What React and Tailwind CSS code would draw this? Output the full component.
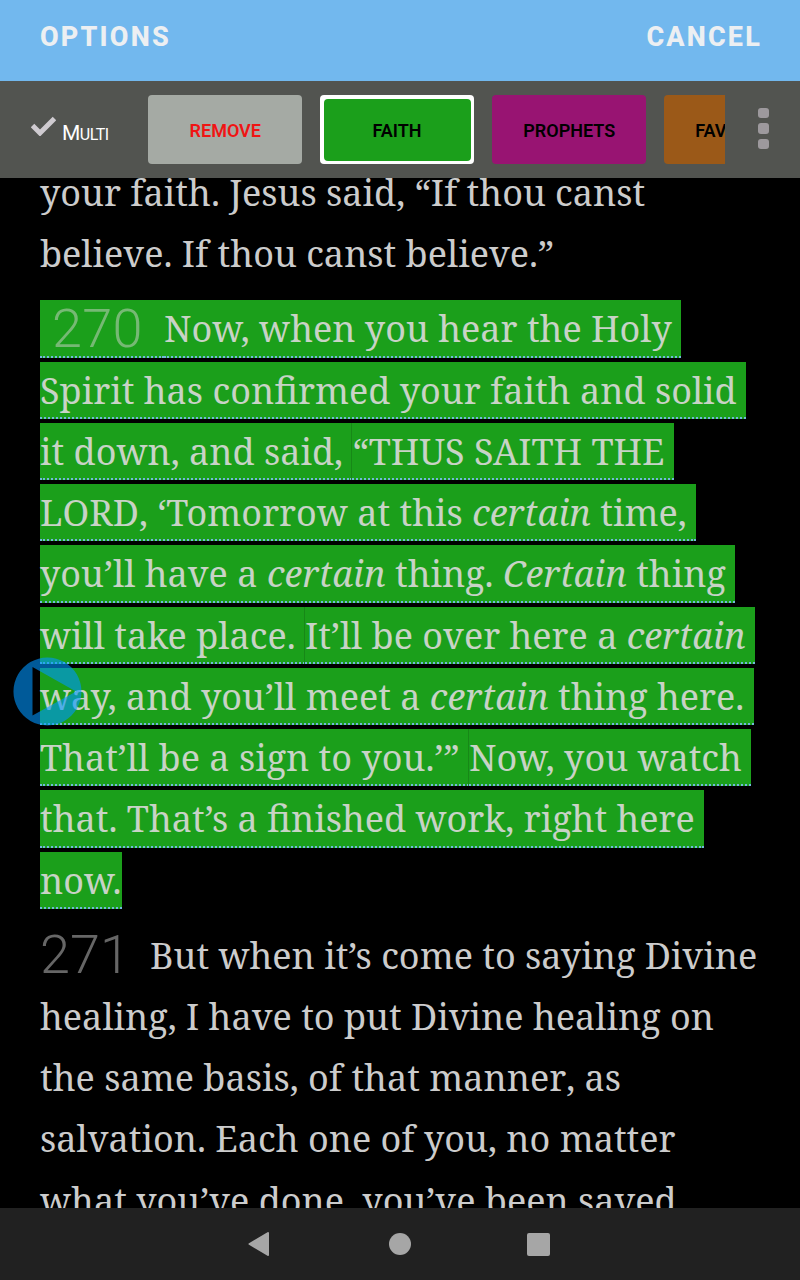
import React from 'react';
import clsx from 'clsx';

const categories = [
    { name: 'REMOVE', style: 'bg-[#a5aaa4] text-[#f01414]' },
    { name: 'FAITH', style: 'bg-white text-black', selected: true },
    { name: 'PROPHETS', style: 'bg-[#981472] text-black' },
    { name: 'FAVORITES', style: 'bg-[#9b5918] text-black' },
];

// Each line is a list of runs, a run holds plain or italic pieces
const highlighted = [
    { runs: [['Now, when you hear the Holy ']], number: '270' },
    { runs: [['Spirit has confirmed your faith and solid ']] },
    { runs: [['it down, and said, '], ['“THUS SAITH THE ']] },
    { runs: [['LORD', ', ‘', 'Tomorrow at this ', { i: 'certain' }, ' time, ']] },
    { runs: [['you’ll have a ', { i: 'certain' }, ' thing. ', { i: 'Certain' }, ' thing ']] },
    { runs: [['will take place. '], ['It’ll be over here a ', { i: 'certain' }, ' ']] },
    { runs: [['way, and you’ll meet a ', { i: 'certain' }, ' thing here. ']] },
    { runs: [['That’ll be a sign to you.’” '], ['Now, you watch ']] },
    { runs: [['that. That’s a finished work, right here ']] },
    { runs: [['now.']] },
];

const following = [
    { pieces: ['But when it’s come to saying Divine'], number: '271' },
    { pieces: ['healing, I have to put Divine healing on'] },
    { pieces: ['the same basis, of that manner', ', as'] },
    { pieces: ['salvation. Each one of you, no matter'] },
    { pieces: ['what you’ve done, you’ve been saved'] },
];

// inline-block keeps the pieces from kerning into each other
const Pieces = ({ pieces }) =>
    pieces.map((piece, i) =>
        typeof piece === 'string' ? <span key={i} className="inline-block">{piece}</span> : <i key={i}>{piece.i}</i>
    );

const VerseNumber = ({ children, className }) => (
    <span className={clsx("inline-block font-['Roboto'] text-[54px] font-light leading-[50px]", className)}>
        {children}
    </span>
);

const App = () => {
    return (
        <div className="flex h-[1280px] w-[800px] flex-col overflow-hidden bg-black font-['Roboto',sans-serif]">
            <header className="flex h-[81px] shrink-0 items-start justify-between bg-[#72b8ee] px-10 pt-[21px] text-[27px] font-extrabold leading-8 tracking-[2.2px] text-[#eceff2]">
                <button>OPTIONS</button>
                <button className="-mr-[2px]">CANCEL</button>
            </header>

            <div className="flex h-[97px] shrink-0 items-center bg-[#525450]">
                <button className="flex w-[148px] shrink-0 items-center pl-[31px] text-white">
                    <svg width="25" height="20" viewBox="0 0 25 20" className="-mt-[7px]">
                        <path d="M1.5 9.5 L9 17 L23.5 2.5" fill="none" stroke="#cfcbd0" strokeWidth="5" />
                    </svg>
                    <span className="ml-[6px] mt-[8px] text-[21px] leading-6 tracking-[-0.5px]">M<span className="text-[16px]">ULTI</span></span>
                </button>
                <div className="flex w-[577px] shrink-0 gap-[18px] overflow-hidden">
                    {categories.map(cat => (
                        <button
                            key={cat.name}
                            className={clsx(
                                'h-[69px] w-[154px] shrink-0 rounded-[4px] text-[18px] font-semibold',
                                cat.style,
                                cat.selected ? 'p-[3.5px]' : 'pt-[2px] pl-[0.5px]'
                            )}
                        >
                            {cat.selected ? (
                                <span className="flex h-full w-full items-center justify-center rounded-[4px] bg-[#1b9f1b] pt-[2px]">
                                    {cat.name}
                                </span>
                            ) : (
                                cat.name
                            )}
                        </button>
                    ))}
                </div>
                <div className="ml-[33px] mb-[2px] flex flex-col gap-[5px]">
                    <span className="h-[10.5px] w-[11px] rounded-[3px] bg-[#9d999d]" />
                    <span className="h-[10.5px] w-[11px] rounded-[3px] bg-[#9d999d]" />
                    <span className="h-[10.5px] w-[11px] rounded-[3px] bg-[#9d999d]" />
                </div>
            </div>

            <main className="relative h-[1030px] shrink-0 overflow-hidden whitespace-pre pl-10 font-['Noto_Serif',serif] text-[36px] leading-[57px] text-[#cccccc]">
                <div className="-mt-[14.5px]">
                    <p className="h-[61.3px]">your faith. Jesus said, “If thou canst</p>
                    <p className="h-[61.3px]">believe. If thou canst believe.”</p>
                </div>

                <div className="mt-[14.3px] text-[#c8d3c6]">
                    {highlighted.map((line, n) => (
                        <div key={n} className="flex h-[61.25px] items-start">
                            {line.number && (
                                <VerseNumber className="h-[57.2px] w-[124px] border-b-2 border-dotted border-[#72b8dc] bg-[#1b9f1b] pl-[12px] pt-[4px] tracking-[0.3px] text-[#76b974]">
                                    {line.number}
                                </VerseNumber>
                            )}
                            {line.runs.map((pieces, r) => (
                                <span
                                    key={r}
                                    className={clsx(
                                        'h-[57.2px] border-b-2 border-dotted border-b-[#72b8dc] bg-[#1b9f1b]',
                                        r > 0 && 'shadow-[-1px_0_0_#178817]'
                                    )}
                                >
                                    <Pieces pieces={pieces} />
                                </span>
                            ))}
                        </div>
                    ))}
                </div>

                <div className="mt-[14px]">
                    {following.map((line, n) => (
                        <p key={n} className="flex h-[61.2px] items-start">
                            {line.number && <VerseNumber className="h-[57.5px] w-[110px] pt-[3px] text-[#666666]">{line.number}</VerseNumber>}
                            <span><Pieces pieces={line.pieces} /></span>
                        </p>
                    ))}
                </div>

                <svg width="69" height="69" viewBox="0 0 69 69" className="absolute left-[13px] top-[479px]">
                    <path
                        d="M34.5 0.5 A34 34 0 1 1 34.4 0.5 Z M19.5 10 V58.5 L63 34.5 Z"
                        fill="#0096ff"
                        fillOpacity="0.6"
                        fillRule="evenodd"
                    />
                </svg>
            </main>

            <nav className="flex h-[72px] shrink-0 items-center bg-[#212121]">
                <svg width="22" height="24" viewBox="0 0 22 24" className="ml-[248px]">
                    <path d="M20 1 L1.5 12 L20 23 Z" fill="#a6a6a6" stroke="#a6a6a6" strokeWidth="2" strokeLinejoin="round" />
                </svg>
                <span className="ml-[119px] h-[22px] w-[22px] rounded-full bg-[#a6a6a6]" />
                <span className="ml-[116px] h-[23px] w-[23px] rounded-[2px] bg-[#a6a6a6]" />
            </nav>
        </div>
    );
};

export default App;
